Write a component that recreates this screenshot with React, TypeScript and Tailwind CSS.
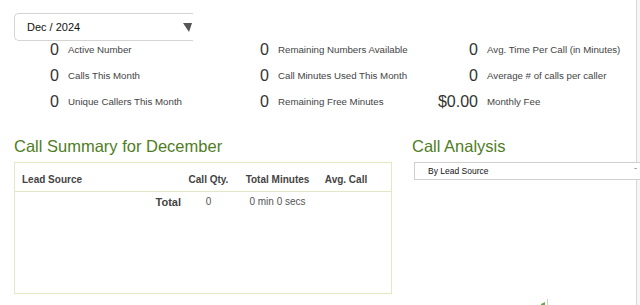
import React from "react";

const stats = [
  [
    { value: "0", label: "Active Number" },
    { value: "0", label: "Remaining Numbers Available" },
    { value: "0", label: "Avg. Time Per Call (in Minutes)" },
  ],
  [
    { value: "0", label: "Calls This Month" },
    { value: "0", label: "Call Minutes Used This Month" },
    { value: "0", label: "Average # of calls per caller" },
  ],
  [
    { value: "0", label: "Unique Callers This Month" },
    { value: "0", label: "Remaining Free Minutes" },
    { value: "$0.00", label: "Monthly Fee" },
  ],
];

export default function App() {
  return (
    <div className="relative w-[640px] h-[305px] overflow-hidden bg-white text-[#333] font-['Liberation_Sans',Arial,sans-serif]">
      {/* right panel edge */}
      <div className="absolute left-[636px] top-0 bottom-0 right-0 border-l border-[#d8d8d8] bg-[#f6f6f6]" />

      {/* Month picker */}
      <div className="pt-[13px] pl-[14px]">
        <div className="w-[179px] h-[28px] flex items-center justify-between border border-r-0 border-[#d4d4d4] rounded-l-[5px] pl-[12px] pr-[1px]">
          <span className="text-[11px] text-[#111]">Dec / 2024</span>
          <svg width="9" height="9" viewBox="0 0 9 9">
            <path d="M0 0 L9 0 L6 9 Z" fill="#555" />
          </svg>
        </div>
      </div>

      {/* Stats */}
      <div className="mt-[-4px] pl-[14px]">
        {stats.map((row, i) => (
          <div key={i} className="grid grid-cols-[210px_209px_1fr] h-[26px]">
            {row.map((s) => (
              <div key={s.label} className="flex items-center">
                <span className="min-w-[45px] text-right text-[16px] leading-none text-[#333]">{s.value}</span>
                <span className="ml-[9px] text-[9.7px] text-[#444]">{s.label}</span>
              </div>
            ))}
          </div>
        ))}
      </div>

      {/* Summary + analysis */}
      <div className="flex mt-[20px] pl-[14px]">
        <div className="w-[378px] shrink-0">
          <h2 className="text-[16.5px] leading-[22px] text-[#4f7d1f]">Call Summary for December</h2>
          <div className="mt-[5px] h-[132px] border border-[#e3e8c4]">
            <table className="w-full border-collapse">
              <thead>
                <tr className="h-[28px] border-b border-[#e3e8c4] text-[10px] text-[#444]">
                  <th className="w-[167px] text-left font-bold pl-[7px] pt-[5px]">Lead Source</th>
                  <th className="w-[53px] text-center font-bold pt-[5px]">Call Qty.</th>
                  <th className="w-[85px] text-center font-bold pt-[5px]">Total Minutes</th>
                  <th className="w-[52px] text-center font-bold pt-[5px]">Avg. Call</th>
                  <th />
                </tr>
              </thead>
              <tbody>
                <tr className="h-[21px] text-[10px]">
                  <td className="text-right pr-[1px] text-[11px] font-bold text-[#444]">Total</td>
                  <td className="text-center text-[#555]">0</td>
                  <td className="text-center text-[#555]">0 min 0 secs</td>
                  <td />
                  <td />
                </tr>
              </tbody>
            </table>
          </div>
        </div>

        <div className="ml-[20px] flex-1 min-w-0">
          <h2 className="text-[16.5px] leading-[22px] text-[#4f7d1f]">Call Analysis</h2>
          <div className="relative mt-[5px] ml-[2px] w-[240px] h-[18px] flex items-center justify-between border border-[#cfcfcf] pl-[13px] pr-[16px] bg-white">
            <span className="text-[8.5px] text-[#111]">By Lead Source</span>
            <span className="text-[8px] text-[#555] leading-none">ˇ</span>
          </div>
        </div>
      </div>

      {/* chart fragment */}
      <svg className="absolute left-[540px] top-[299px]" width="10" height="6" viewBox="0 0 10 6">
        <path d="M1 5 L5 3 L5 6 L1 6 Z" fill="#6aa84f" />
        <line x1="7.5" y1="0" x2="7.5" y2="6" stroke="#cfcfcf" strokeWidth="1" />
      </svg>
    </div>
  );
}
